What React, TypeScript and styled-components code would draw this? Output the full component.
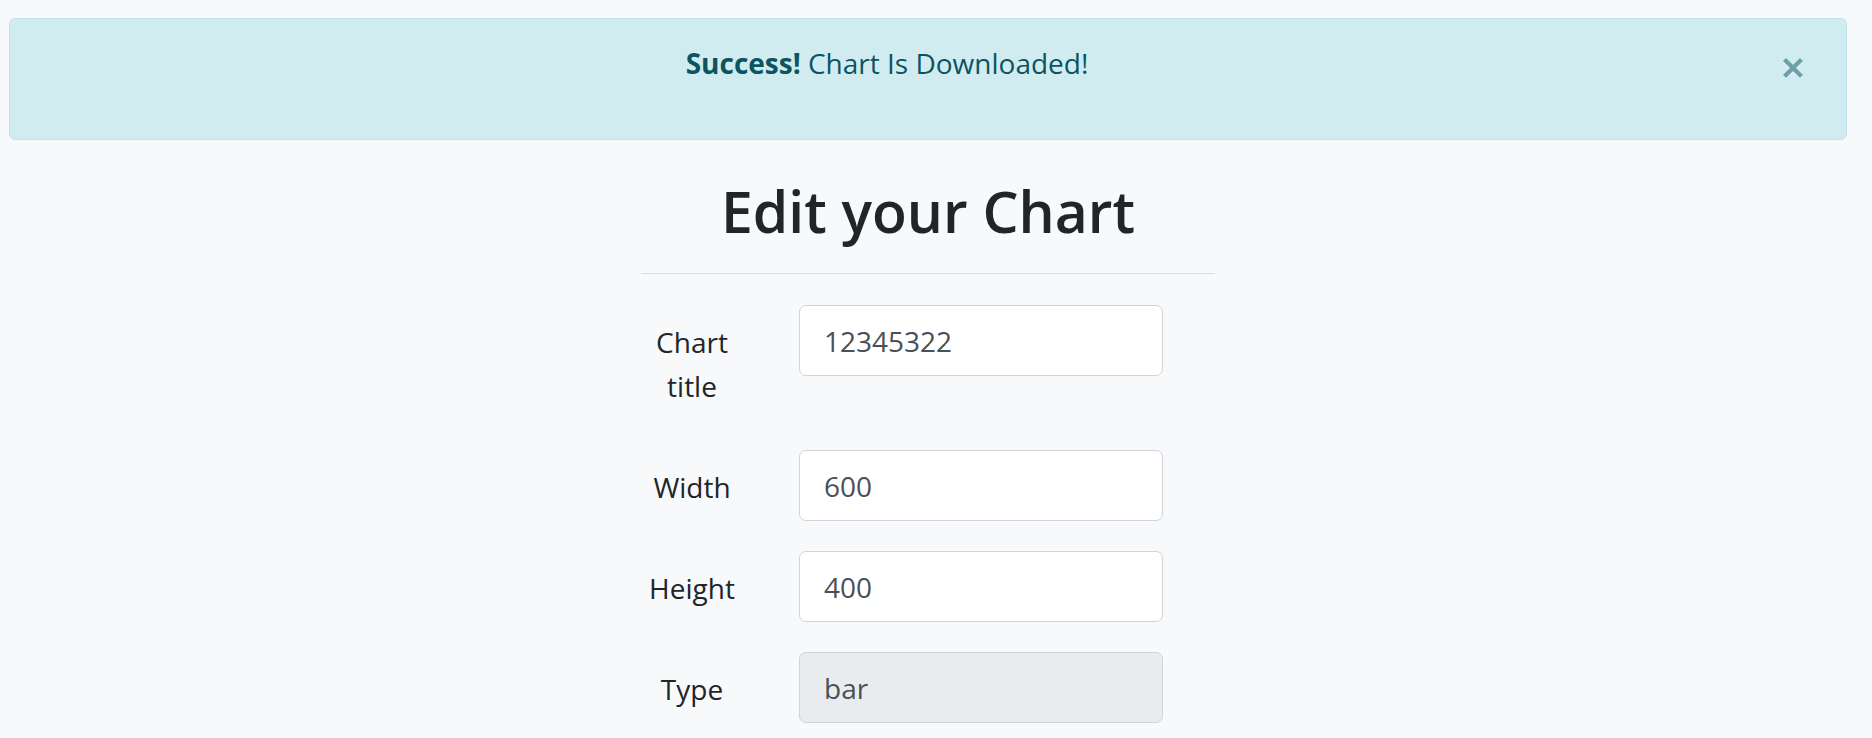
import React from 'react'
import styled, { createGlobalStyle } from 'styled-components'

const GlobalStyle = createGlobalStyle`
  html, body {
    margin: 0;
    background: #f8f9fa;
  }

  body {
    font-family: 'Open Sans', 'Noto Sans', sans-serif;
    color: #212529;
  }
`

const colors = {
  text: '#212529',
  inputText: '#495057',
  border: '#ced4da',
  readonly: '#e9ecef',
  alertBg: '#d1ecf1',
  alertBorder: '#bee5eb',
  alertText: '#0c5460',
  close: '#6ea0a8',
}

const Page = styled.div`
  min-height: 738px;
  box-sizing: border-box;
  padding: 18px 25px 0 9px;
`

const Alert = styled.div`
  position: relative;
  box-sizing: border-box;
  height: 122px;
  padding: 23px 112px 0 30px;
  background: ${colors.alertBg};
  border: 1px solid ${colors.alertBorder};
  border-radius: 6px;
  color: ${colors.alertText};
  font-size: 28px;
  line-height: 43px;
  text-align: center;

  strong {
    font-weight: 700;
  }
`

const CloseButton = styled.button`
  position: absolute;
  top: 37px;
  right: 41px;
  width: 24px;
  height: 24px;
  padding: 0;
  border: 0;
  background: transparent;
  cursor: pointer;
  display: flex;
  align-items: center;
  justify-content: center;

  svg {
    filter: drop-shadow(0 1px 0 rgba(255, 255, 255, .8));
  }
`

const Main = styled.div`
  width: 574px;
  margin: 0 auto;
`

const Title = styled.h1`
  margin: 37px 0 0;
  font-size: 57px;
  font-weight: 600;
  line-height: 68px;
  text-align: center;
  color: ${colors.text};
`

const Divider = styled.hr`
  margin: 28px 0 31px;
  border: 0;
  border-top: 1px solid rgba(0, 0, 0, .1);
`

const Form = styled.form`
  display: flex;
  flex-direction: column;
  gap: 30px;
`

const Row = styled.div`
  display: grid;
  grid-template-columns: 102px 364px;
  column-gap: 56px;
  align-items: start;
`

const Label = styled.label`
  padding: 15px 0 12px;
  font-size: 28px;
  line-height: 44px;
  text-align: center;
  color: ${colors.text};
`

const Input = styled.input<{ $readOnly?: boolean }>`
  box-sizing: border-box;
  width: 100%;
  height: 71px;
  padding: 0 24px;
  border: 1px solid ${colors.border};
  border-radius: 7px;
  background: ${({ $readOnly }) => ($readOnly ? colors.readonly : '#fff')};
  color: ${colors.inputText};
  font-family: 'Open Sans', 'Noto Sans', sans-serif;
  font-size: 28px;
  outline: none;
`

const fields = [
  { id: 'title', label: 'Chart title', value: '12345322' },
  { id: 'width', label: 'Width', value: '600' },
  { id: 'height', label: 'Height', value: '400' },
  { id: 'type', label: 'Type', value: 'bar', readOnly: true },
]

const App = (): JSX.Element => {
  return (
    <Page>
      <GlobalStyle />
      <Alert role='alert'>
        <strong>Success!</strong> Chart Is Downloaded!
        <CloseButton type='button' aria-label='Close'>
          <svg width='22' height='22' viewBox='0 0 22 22'>
            <path d='M2.5 2.5 L19.5 19.5 M19.5 2.5 L2.5 19.5' stroke={colors.close} strokeWidth='4.4' strokeLinecap='butt' />
          </svg>
        </CloseButton>
      </Alert>
      <Main>
        <Title>Edit your Chart</Title>
        <Divider />
        <Form>
          {fields.map((field) => (
            <Row key={field.id}>
              <Label htmlFor={field.id}>
                {field.label === 'Chart title' ? <>Chart<br />title</> : field.label}
              </Label>
              <Input
                id={field.id}
                defaultValue={field.value}
                readOnly={field.readOnly}
                $readOnly={field.readOnly}
              />
            </Row>
          ))}
        </Form>
      </Main>
    </Page>
  )
}

export default App
